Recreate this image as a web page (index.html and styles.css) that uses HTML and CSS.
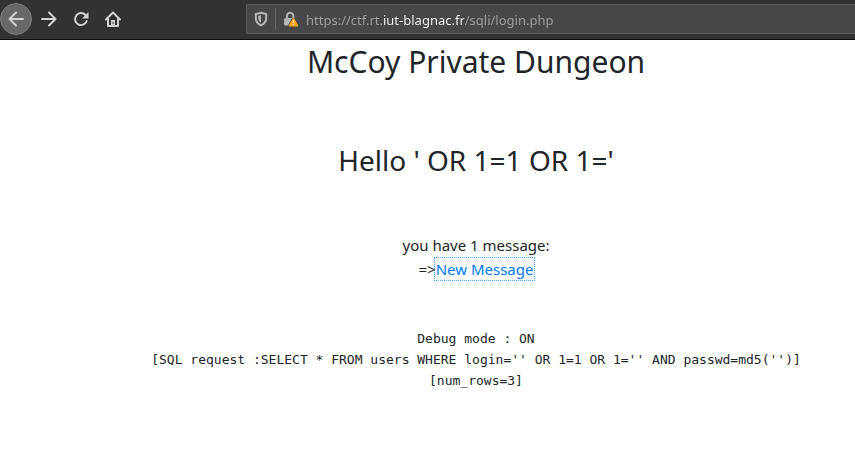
FILE: index.html
```
<!DOCTYPE html>
<html lang="en">
<head>
  <meta charset="utf-8">
  <title>McCoy Private Dungeon</title>
  <link rel="stylesheet" href="styles.css">
</head>
<body>
  <header class="toolbar">
    <nav class="nav-buttons" aria-label="Browser navigation">
      <button class="nav-button nav-button--back" type="button" aria-label="Back">
        <svg viewBox="0 0 16 16"><path d="M15 8H1.500M8 1.500 1.500 8 8 14.500"/></svg>
      </button>
      <button class="nav-button" type="button" aria-label="Forward">
        <svg viewBox="0 0 16 16"><path d="M1 8h13.500M8 1.500 14.500 8 8 14.500"/></svg>
      </button>
      <button class="nav-button" type="button" aria-label="Reload">
        <svg viewBox="0 0 16 16"><path d="M12.500 4A6 6 0 1 0 13.700 10"/><path class="solid" d="M15.500 1v6.500H9z"/></svg>
      </button>
      <button class="nav-button" type="button" aria-label="Home">
        <svg viewBox="0 0 16 16"><path d="M1 8.500 8 1.500l7 7M3 7.500V15h10V7.500"/><path class="solid" d="M6 15V9h4v6z"/><path class="handle" d="M8 11.500v1"/></svg>
      </button>
    </nav>
    <div class="address-bar">
      <svg class="shield" viewBox="0 0 16 16" aria-hidden="true">
        <path class="shield-outline" d="M8 1.800 13.200 3v4c0 3.500-1.700 5.700-5.200 7.300C4.500 12.700 2.800 10.500 2.800 7V3z"/>
        <path class="shield-half" d="M8 4.200v7.500C6 10.500 5.200 9.200 5.200 7V4.800z"/>
      </svg>
      <span class="divider"></span>
      <svg class="lock" viewBox="0 0 16 16" aria-hidden="true">
        <path class="lock-shackle" d="M4 8V5a3.200 3.200 0 0 1 6.400 0v2"/>
        <path class="lock-body" d="M2.500 7H9L5 14.500H2.500a1.500 1.500 0 0 1-1.500-1.500V8.500A1.500 1.500 0 0 1 2.500 7z"/>
        <path class="warning" d="M10.500 7 15 15H6z"/>
        <path class="warning-mark" d="M10.500 9v3M10.500 13v1"/>
      </svg>
      <input class="url" type="text" aria-label="Address" value="https://ctf.rt.iut-blagnac.fr/sqli/login.php">
    </div>
  </header>

  <main class="page">
    <h1>McCoy Private Dungeon</h1>
    <h2>Hello ' OR 1=1 OR 1='</h2>
    <p class="messages">you have 1 message:<br>=&gt;<a href="#message">New Message</a></p>
    <pre class="debug">Debug mode : ON
[SQL request :SELECT * FROM users WHERE login='' OR 1=1 OR 1='' AND passwd=md5('')]
[num_rows=3]</pre>
  </main>
</body>
</html>
```
FILE: styles.css
```
* {
  box-sizing: border-box;
}

body {
  margin: 0;
  background: #fff;
  color: #212529;
  font-family: "Noto Sans", sans-serif;
  font-size: 15px;
  line-height: 24px;
}

.toolbar {
  display: flex;
  align-items: center;
  height: 40px;
  padding-bottom: 1px;
  background: #323234;
  border-bottom: 1px solid #0c0c0d;
}

.nav-buttons {
  display: flex;
  flex: none;
  width: 246px;
}

.nav-button {
  display: flex;
  align-items: center;
  justify-content: center;
  width: 32px;
  height: 32px;
  padding: 0;
  border: 0;
  border-radius: 50%;
  background: none;
}

.nav-button--back {
  margin-right: 1px;
  border: 1px solid #7b7b7d;
  background: #68686a;
}

.nav-button svg {
  width: 16px;
  height: 16px;
  fill: none;
  stroke: #d2d2d3;
  stroke-width: 2;
  stroke-linecap: round;
  stroke-linejoin: round;
}

.nav-button .solid {
  fill: #d2d2d3;
  stroke: none;
}

.nav-button .handle {
  stroke: #323234;
  stroke-width: 1;
}

.address-bar {
  display: flex;
  flex: 1;
  align-items: center;
  height: 30px;
  padding-left: 6px;
  border: 1px solid #5c5c5e;
  border-right: 0;
  border-radius: 2px 0 0 2px;
  background: #474749;
}

.address-bar svg {
  flex: none;
  width: 16px;
  height: 16px;
}

.shield-outline {
  fill: none;
  stroke: #b5b5b6;
  stroke-width: 2;
}

.shield-half {
  fill: #b5b5b6;
}

.divider {
  width: 1px;
  height: 22px;
  margin: 0 7px 0 6px;
  background: #656567;
}

.lock-shackle {
  fill: none;
  stroke: #b5b5b6;
  stroke-width: 2;
}

.lock-body {
  fill: #b5b5b6;
}

.warning {
  fill: #ffa40a;
  stroke: #ffa40a;
  stroke-linejoin: round;
}

.warning-mark {
  stroke: #fff;
}

.url {
  flex: 1;
  min-width: 0;
  height: 26px;
  margin-left: 7px;
  padding: 2px 0 0;
  border: 0;
  outline: 0;
  background: linear-gradient(90deg, #a0a0a2 76px, #f9f9fa 76px 158px, #a0a0a2 158px);
  background-clip: text;
  -webkit-background-clip: text;
  -webkit-text-fill-color: transparent;
  color: #a0a0a2;
  font: 13px/24px "Noto Sans", sans-serif;
}

.page {
  padding-left: 97px;
  text-align: center;
}

h1,
h2 {
  margin: 0;
  font-weight: 400;
}

h1 {
  padding-top: 3px;
  font-size: 30px;
  line-height: 38px;
}

h2 {
  margin-top: 62px;
  font-size: 28px;
  line-height: 34px;
}

.messages {
  margin: 56px 0 0;
}

.messages a {
  outline: 1px dotted #4da3ff;
  outline-offset: 1px;
  color: #007bff;
  text-decoration: none;
}

.debug {
  margin: 47px 0 0;
  font-family: "DejaVu Sans Mono", monospace;
  font-size: 13px;
  line-height: 21px;
}
```
